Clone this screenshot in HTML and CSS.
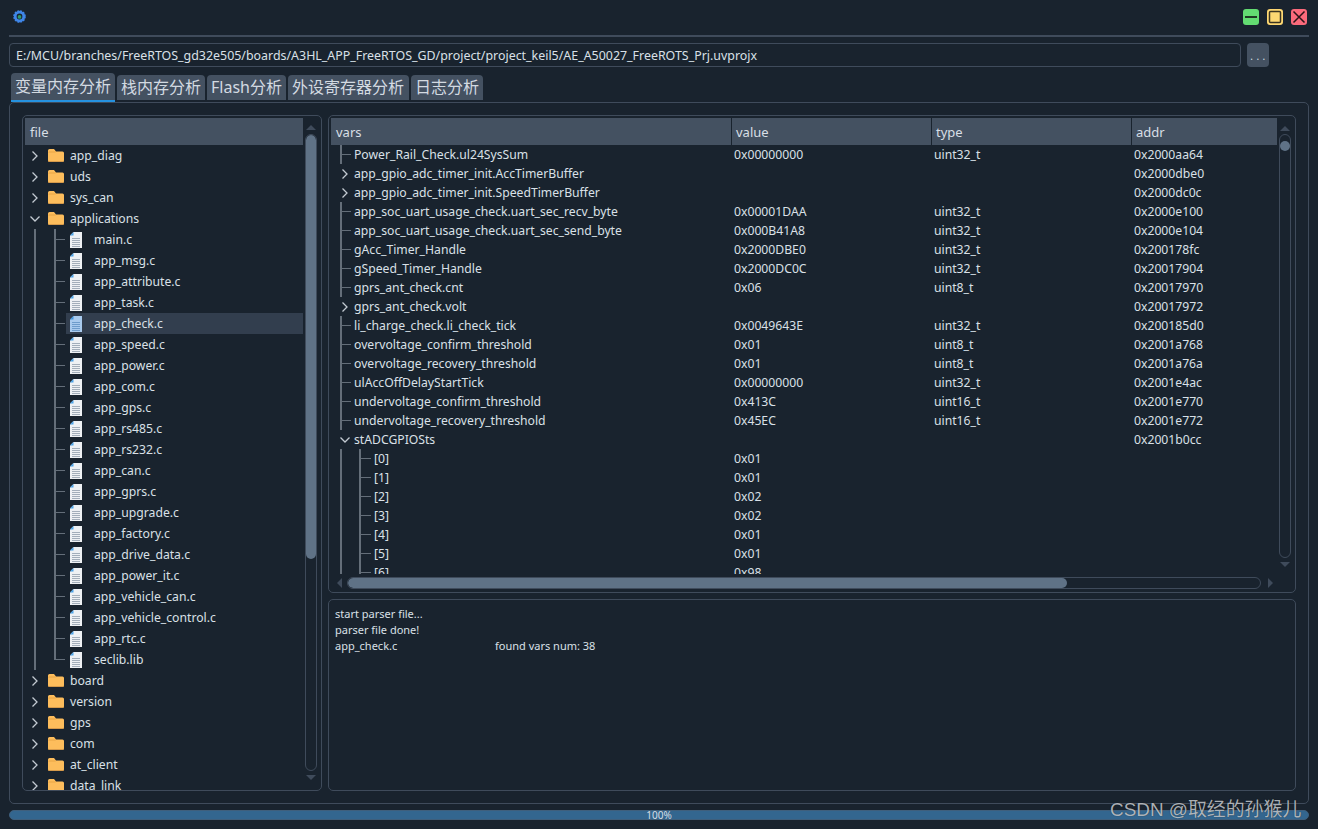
FILE: index.html
```html
<!DOCTYPE html>
<html lang="zh">
<head>
<meta charset="utf-8">
<title>Var Analyzer</title>
<link rel="stylesheet" href="styles.css">
</head>
<body>
<svg class="defs" width="0" height="0">
  <symbol id="folder" viewBox="0 0 16 13"><path d="M0 1.5Q0 0 1.5 0H6L8 2.5H14.5Q16 2.5 16 4V11.5Q16 13 14.5 13H1.5Q0 13 0 11.5Z" fill="#fdbd5c"/><path d="M0 3.5H7.5L8 2.5H1Z" fill="#e9a544"/><path d="M0 12.3H16V11.5Q16 13 14.5 13H1.5Q0 13 0 11.5Z" fill="#c98f45"/></symbol>
  <symbol id="file" viewBox="0 0 12 16"><path d="M3.500 0H12V16H0V3.500Z" fill="#eef1f4"/><path d="M3.500 0V3.500H0Z" fill="#4ba3e8"/><path d="M2 6.500H10M2 8.500H10M2 10.500H10M2 12.500H10M2 14.500H10" stroke="#a3aeba" stroke-width="1"/></symbol>
  <symbol id="file-sel" viewBox="0 0 12 16"><path d="M3.500 0H12V16H0V3.500Z" fill="#a9cbee"/><path d="M3.500 0V3.500H0Z" fill="#3f93dd"/><path d="M2 6.500H10M2 8.500H10M2 10.500H10M2 12.500H10M2 14.500H10" stroke="#6d9ccb" stroke-width="1"/></symbol>
  <symbol id="chev-r" viewBox="0 0 10 12"><path d="M2.500 1.500L7 6L2.500 10.500" fill="none" stroke="#c3cad2" stroke-width="1.300"/></symbol>
  <symbol id="chev-d" viewBox="0 0 12 10"><path d="M1.500 2.500L6 7L10.500 2.500" fill="none" stroke="#c3cad2" stroke-width="1.300"/></symbol>
</svg>
<div class="app">
  <header class="titlebar">
    <svg class="appicon" viewBox="0 0 14 14" width="13" height="13"><circle cx="7" cy="7" r="4.600" fill="none" stroke="#3f86e8" stroke-width="3"/><circle cx="7" cy="7" r="6" fill="none" stroke="#3f86e8" stroke-width="1.600" stroke-dasharray="2 1.140"/><circle cx="7" cy="7.500" r="2" fill="#2e9a6a"/></svg>
    <div class="winbtns">
      <span class="winbtn min"><svg viewBox="0 0 16 16"><path d="M2 8H14" stroke="#1f3a24" stroke-width="2"/></svg></span>
      <span class="winbtn max"><svg viewBox="0 0 16 16"><rect x="2.500" y="2.500" width="11" height="11" rx="1" fill="none" stroke="#3a3320" stroke-width="1.500"/></svg></span>
      <span class="winbtn close"><svg viewBox="0 0 16 16"><path d="M2.500 2.500L13.500 13.500M13.500 2.500L2.500 13.500" stroke="#2a1418" stroke-width="1.500"/></svg></span>
    </div>
  </header>
  <div class="pathrow">
    <div class="pathinput">E:/MCU/branches/FreeRTOS_gd32e505/boards/A3HL_APP_FreeRTOS_GD/project/project_keil5/AE_A50027_FreeROTS_Prj.uvprojx</div>
    <div class="browse">...</div>
  </div>
  <nav class="tabs">
    <div class="tab active">变量内存分析</div>
    <div class="tab">栈内存分析</div>
    <div class="tab">Flash分析</div>
    <div class="tab">外设寄存器分析</div>
    <div class="tab">日志分析</div>
  </nav>
  <main class="panel">
    <section class="treebox">
      <div class="treemain">
        <div class="hdr treehdr">file</div>
        <div class="treebody">
          <div class="trow"><span class="tw"><svg class="cr"><use href="#chev-r"/></svg></span><svg class="fo"><use href="#folder"/></svg><span>app_diag</span></div>
          <div class="trow"><span class="tw"><svg class="cr"><use href="#chev-r"/></svg></span><svg class="fo"><use href="#folder"/></svg><span>uds</span></div>
          <div class="trow"><span class="tw"><svg class="cr"><use href="#chev-r"/></svg></span><svg class="fo"><use href="#folder"/></svg><span>sys_can</span></div>
          <div class="trow"><span class="tw"><svg class="cd"><use href="#chev-d"/></svg></span><svg class="fo"><use href="#folder"/></svg><span>applications</span></div>
          <div class="trow"><i class="g v"></i><i class="g t"></i><div class="it"><svg class="fi"><use href="#file"/></svg><span>main.c</span></div></div>
          <div class="trow"><i class="g v"></i><i class="g t"></i><div class="it"><svg class="fi"><use href="#file"/></svg><span>app_msg.c</span></div></div>
          <div class="trow"><i class="g v"></i><i class="g t"></i><div class="it"><svg class="fi"><use href="#file"/></svg><span>app_attribute.c</span></div></div>
          <div class="trow"><i class="g v"></i><i class="g t"></i><div class="it"><svg class="fi"><use href="#file"/></svg><span>app_task.c</span></div></div>
          <div class="trow"><i class="g v"></i><i class="g t"></i><div class="it sel"><svg class="fi"><use href="#file-sel"/></svg><span>app_check.c</span></div></div>
          <div class="trow"><i class="g v"></i><i class="g t"></i><div class="it"><svg class="fi"><use href="#file"/></svg><span>app_speed.c</span></div></div>
          <div class="trow"><i class="g v"></i><i class="g t"></i><div class="it"><svg class="fi"><use href="#file"/></svg><span>app_power.c</span></div></div>
          <div class="trow"><i class="g v"></i><i class="g t"></i><div class="it"><svg class="fi"><use href="#file"/></svg><span>app_com.c</span></div></div>
          <div class="trow"><i class="g v"></i><i class="g t"></i><div class="it"><svg class="fi"><use href="#file"/></svg><span>app_gps.c</span></div></div>
          <div class="trow"><i class="g v"></i><i class="g t"></i><div class="it"><svg class="fi"><use href="#file"/></svg><span>app_rs485.c</span></div></div>
          <div class="trow"><i class="g v"></i><i class="g t"></i><div class="it"><svg class="fi"><use href="#file"/></svg><span>app_rs232.c</span></div></div>
          <div class="trow"><i class="g v"></i><i class="g t"></i><div class="it"><svg class="fi"><use href="#file"/></svg><span>app_can.c</span></div></div>
          <div class="trow"><i class="g v"></i><i class="g t"></i><div class="it"><svg class="fi"><use href="#file"/></svg><span>app_gprs.c</span></div></div>
          <div class="trow"><i class="g v"></i><i class="g t"></i><div class="it"><svg class="fi"><use href="#file"/></svg><span>app_upgrade.c</span></div></div>
          <div class="trow"><i class="g v"></i><i class="g t"></i><div class="it"><svg class="fi"><use href="#file"/></svg><span>app_factory.c</span></div></div>
          <div class="trow"><i class="g v"></i><i class="g t"></i><div class="it"><svg class="fi"><use href="#file"/></svg><span>app_drive_data.c</span></div></div>
          <div class="trow"><i class="g v"></i><i class="g t"></i><div class="it"><svg class="fi"><use href="#file"/></svg><span>app_power_it.c</span></div></div>
          <div class="trow"><i class="g v"></i><i class="g t"></i><div class="it"><svg class="fi"><use href="#file"/></svg><span>app_vehicle_can.c</span></div></div>
          <div class="trow"><i class="g v"></i><i class="g t"></i><div class="it"><svg class="fi"><use href="#file"/></svg><span>app_vehicle_control.c</span></div></div>
          <div class="trow"><i class="g v"></i><i class="g t"></i><div class="it"><svg class="fi"><use href="#file"/></svg><span>app_rtc.c</span></div></div>
          <div class="trow"><i class="g v"></i><i class="g l"></i><div class="it"><svg class="fi"><use href="#file"/></svg><span>seclib.lib</span></div></div>
          <div class="trow"><span class="tw"><svg class="cr"><use href="#chev-r"/></svg></span><svg class="fo"><use href="#folder"/></svg><span>board</span></div>
          <div class="trow"><span class="tw"><svg class="cr"><use href="#chev-r"/></svg></span><svg class="fo"><use href="#folder"/></svg><span>version</span></div>
          <div class="trow"><span class="tw"><svg class="cr"><use href="#chev-r"/></svg></span><svg class="fo"><use href="#folder"/></svg><span>gps</span></div>
          <div class="trow"><span class="tw"><svg class="cr"><use href="#chev-r"/></svg></span><svg class="fo"><use href="#folder"/></svg><span>com</span></div>
          <div class="trow"><span class="tw"><svg class="cr"><use href="#chev-r"/></svg></span><svg class="fo"><use href="#folder"/></svg><span>at_client</span></div>
          <div class="trow"><span class="tw"><svg class="cr"><use href="#chev-r"/></svg></span><svg class="fo"><use href="#folder"/></svg><span>data_link</span></div>
        </div>
      </div>
      <div class="vbar treebar">
        <span class="arr up"></span>
        <div class="vtrack"><div class="vthumb tall"></div></div>
        <span class="arr down"></span>
      </div>
    </section>
    <div class="rightcol">
      <section class="tablebox">
        <div class="tablemid">
          <div class="tablemain">
            <div class="thead">
              <div class="hdr c1">vars</div><div class="hdr c2">value</div><div class="hdr c3">type</div><div class="hdr c4">addr</div>
            </div>
            <div class="tbody">
              <div class="vrow"><div class="c1 n"><i class="m t"></i><span>Power_Rail_Check.ul24SysSum</span></div><div class="c2">0x00000000</div><div class="c3">uint32_t</div><div class="c4">0x2000aa64</div></div>
              <div class="vrow"><div class="c1 n"><span class="m"><svg class="cr"><use href="#chev-r"/></svg></span><span>app_gpio_adc_timer_init.AccTimerBuffer</span></div><div class="c2"></div><div class="c3"></div><div class="c4">0x2000dbe0</div></div>
              <div class="vrow"><div class="c1 n"><span class="m"><svg class="cr"><use href="#chev-r"/></svg></span><span>app_gpio_adc_timer_init.SpeedTimerBuffer</span></div><div class="c2"></div><div class="c3"></div><div class="c4">0x2000dc0c</div></div>
              <div class="vrow"><div class="c1 n"><i class="m t"></i><span>app_soc_uart_usage_check.uart_sec_recv_byte</span></div><div class="c2">0x00001DAA</div><div class="c3">uint32_t</div><div class="c4">0x2000e100</div></div>
              <div class="vrow"><div class="c1 n"><i class="m t"></i><span>app_soc_uart_usage_check.uart_sec_send_byte</span></div><div class="c2">0x000B41A8</div><div class="c3">uint32_t</div><div class="c4">0x2000e104</div></div>
              <div class="vrow"><div class="c1 n"><i class="m t"></i><span>gAcc_Timer_Handle</span></div><div class="c2">0x2000DBE0</div><div class="c3">uint32_t</div><div class="c4">0x200178fc</div></div>
              <div class="vrow"><div class="c1 n"><i class="m t"></i><span>gSpeed_Timer_Handle</span></div><div class="c2">0x2000DC0C</div><div class="c3">uint32_t</div><div class="c4">0x20017904</div></div>
              <div class="vrow"><div class="c1 n"><i class="m t"></i><span>gprs_ant_check.cnt</span></div><div class="c2">0x06</div><div class="c3">uint8_t</div><div class="c4">0x20017970</div></div>
              <div class="vrow"><div class="c1 n"><span class="m"><svg class="cr"><use href="#chev-r"/></svg></span><span>gprs_ant_check.volt</span></div><div class="c2"></div><div class="c3"></div><div class="c4">0x20017972</div></div>
              <div class="vrow"><div class="c1 n"><i class="m t"></i><span>li_charge_check.li_check_tick</span></div><div class="c2">0x0049643E</div><div class="c3">uint32_t</div><div class="c4">0x200185d0</div></div>
              <div class="vrow"><div class="c1 n"><i class="m t"></i><span>overvoltage_confirm_threshold</span></div><div class="c2">0x01</div><div class="c3">uint8_t</div><div class="c4">0x2001a768</div></div>
              <div class="vrow"><div class="c1 n"><i class="m t"></i><span>overvoltage_recovery_threshold</span></div><div class="c2">0x01</div><div class="c3">uint8_t</div><div class="c4">0x2001a76a</div></div>
              <div class="vrow"><div class="c1 n"><i class="m t"></i><span>ulAccOffDelayStartTick</span></div><div class="c2">0x00000000</div><div class="c3">uint32_t</div><div class="c4">0x2001e4ac</div></div>
              <div class="vrow"><div class="c1 n"><i class="m t"></i><span>undervoltage_confirm_threshold</span></div><div class="c2">0x413C</div><div class="c3">uint16_t</div><div class="c4">0x2001e770</div></div>
              <div class="vrow"><div class="c1 n"><i class="m t"></i><span>undervoltage_recovery_threshold</span></div><div class="c2">0x45EC</div><div class="c3">uint16_t</div><div class="c4">0x2001e772</div></div>
              <div class="vrow"><div class="c1 n"><span class="m"><svg class="cd"><use href="#chev-d"/></svg></span><span>stADCGPIOSts</span></div><div class="c2"></div><div class="c3"></div><div class="c4">0x2001b0cc</div></div>
              <div class="vrow"><div class="c1 n"><i class="m v"></i><i class="k t"></i><span>[0]</span></div><div class="c2">0x01</div><div class="c3"></div><div class="c4"></div></div>
              <div class="vrow"><div class="c1 n"><i class="m v"></i><i class="k t"></i><span>[1]</span></div><div class="c2">0x01</div><div class="c3"></div><div class="c4"></div></div>
              <div class="vrow"><div class="c1 n"><i class="m v"></i><i class="k t"></i><span>[2]</span></div><div class="c2">0x02</div><div class="c3"></div><div class="c4"></div></div>
              <div class="vrow"><div class="c1 n"><i class="m v"></i><i class="k t"></i><span>[3]</span></div><div class="c2">0x02</div><div class="c3"></div><div class="c4"></div></div>
              <div class="vrow"><div class="c1 n"><i class="m v"></i><i class="k t"></i><span>[4]</span></div><div class="c2">0x01</div><div class="c3"></div><div class="c4"></div></div>
              <div class="vrow"><div class="c1 n"><i class="m v"></i><i class="k t"></i><span>[5]</span></div><div class="c2">0x01</div><div class="c3"></div><div class="c4"></div></div>
              <div class="vrow"><div class="c1 n"><i class="m v"></i><i class="k t"></i><span>[6]</span></div><div class="c2">0x98</div><div class="c3"></div><div class="c4"></div></div>
            </div>
          </div>
          <div class="vbar tablebar">
            <span class="arr up"></span>
            <div class="vtrack"><div class="vdot"></div></div>
            <span class="arr down"></span>
          </div>
        </div>
        <div class="hbar">
          <span class="arr left"></span>
          <div class="htrack"><div class="hthumb"></div></div>
          <span class="arr right"></span>
        </div>
      </section>
      <section class="logbox">
        <div>start parser file...</div>
        <div>parser file done!</div>
        <div class="logline"><span class="logname">app_check.c</span><span>found vars num: 38</span></div>
      </section>
    </div>
  </main>
  <div class="progress">100%</div>
</div>
<div class="watermark">CSDN @取经的孙猴儿</div>
</body>
</html>
```
FILE: styles.css
```css
* { box-sizing: border-box; }
html, body { margin: 0; height: 100%; }
body {
  position: relative;
  overflow: hidden;
  background: #19232e;
  color: #d9e0e7;
  font: 12.2px/1 "Noto Sans", "Noto Sans CJK SC", sans-serif;
}
.defs { position: absolute; }
.app { display: flex; flex-direction: column; height: 829px; padding: 0 9px; }

.titlebar {
  display: flex; align-items: center; justify-content: space-between;
  height: 37px; flex: none;
  border-bottom: 2px solid #3f4b5b;
  padding: 0 2px 2px 4px;
}
.winbtns { display: flex; gap: 8px; }
.winbtn { width: 16px; height: 16px; border-radius: 3px; display: block; }
.winbtn svg { display: block; width: 16px; height: 16px; }
.min { background: #63dc72; }
.max { background: #fdd772; }
.close { background: #fa6a7b; }

.pathrow { display: flex; gap: 6px; margin-top: 6px; height: 24px; flex: none; }
.pathinput {
  flex: 1; border: 1px solid #3f4b5b; border-radius: 4px;
  padding: 0 6px; line-height: 23px; white-space: nowrap; font-size: 12.42px;
}
.browse {
  width: 22px; background: #445161; border-radius: 4px; margin-right: 40px;
  text-align: center; line-height: 26px; font-size: 10px; letter-spacing: 3.5px; padding-left: 3px;
}

.tabs { display: flex; align-items: flex-end; gap: 2px; height: 29px; margin-top: 6px; padding-left: 2px; flex: none; }
.tab {
  height: 25px; margin-bottom: 2px; padding: 0 4px; background: #445161; border-radius: 4px 4px 0 0;
  font-size: 16px; line-height: 25px; color: #d3dae1;
}
.tab:nth-child(4) { padding-right: 5px; }
.tab.active { height: 29px; margin-bottom: 0; border-bottom: 2px solid #2592df; line-height: 27px; }

.panel {
  flex: none; height: 702px; display: flex; gap: 6px;
  border: 1px solid #3f4b5b; border-radius: 5px;
  padding: 12px;
}
.treebox {
  width: 300px; flex: none; display: flex; overflow: hidden;
  border: 1px solid #3f4b5b; border-radius: 5px;
  padding: 2px 4px 0 2px;
}
.treemain { width: 278px; flex: none; display: flex; flex-direction: column; min-height: 0; }
.hdr { background: #445161; height: 27px; line-height: 29px; font-size: 13px; padding-left: 4px; color: #d8dfe6; }
.hdr.c1 { padding-left: 5px; }
.treehdr { flex: none; padding-left: 5px; }
.treebody { flex: 1; overflow: hidden; }
.trow { display: flex; align-items: center; height: 21px; white-space: nowrap; }
.trow > span:last-child { margin-left: 6px; padding-top: 2px; }
.tw { width: 20px; flex: none; display: flex; justify-content: center; }
.cr { width: 10px; height: 12px; display: block; }
.cd { width: 12px; height: 10px; display: block; }
.fo { width: 16px; height: 13px; margin-left: 3px; flex: none; }
.g { display: block; flex: none; height: 21px; }
.g.v { width: 20px; background: linear-gradient(#646e79, #646e79) 9px 0 / 2px 100% no-repeat; }
.g.t { width: 21px; background: linear-gradient(#646e79, #646e79) 9px 0 / 2px 100% no-repeat, linear-gradient(#646e79, #646e79) 11px 10px / 9px 1px no-repeat; }
.g.l { width: 21px; background: linear-gradient(#646e79, #646e79) 9px 0 / 2px 11px no-repeat, linear-gradient(#646e79, #646e79) 11px 10px / 9px 1px no-repeat; }
.it { flex: 1; display: flex; align-items: center; height: 21px; padding-left: 4px; }
.it span { margin-left: 12px; padding-top: 2px; }
.sel { background: #323e4e; }
.fi { width: 12px; height: 16px; flex: none; }

.vbar { display: flex; flex-direction: column; align-items: center; flex: none; width: 12px; }
.treebar { margin-left: 2px; padding-top: 7px; }
.vtrack { border: 1px solid #3f4b5b; border-radius: 6px; width: 12px; overflow: hidden; }
.treebar .vtrack { height: 637px; margin-top: 4px; }
.vthumb.tall { height: 424px; background: #5f7286; border-radius: 5px; }
.arr { display: block; width: 0; height: 0; flex: none; border-style: solid; border-color: transparent; }
.arr.up { border-width: 0 5px 5px; border-bottom-color: #3f4b5b; }
.arr.down { border-width: 5px 5px 0; border-top-color: #3f4b5b; margin-top: 4px; }
.arr.left { border-width: 5px 5px 5px 0; border-right-color: #3f4b5b; }
.arr.right { border-width: 5px 0 5px 5px; border-left-color: #3f4b5b; }

.rightcol { flex: 1; display: flex; flex-direction: column; gap: 6px; min-width: 0; }
.tablebox {
  height: 478px; flex: none; display: flex; flex-direction: column;
  border: 1px solid #3f4b5b; border-radius: 5px;
  padding: 2px 4px 4px 2px;
}
.tablemid { display: flex; height: 456px; flex: none; gap: 2px; }
.tablemain { width: 946px; flex: none; overflow: hidden; display: flex; flex-direction: column; }
.thead { display: flex; gap: 1px; flex: none; }
.c1 { width: 400px; flex: none; }
.c2 { width: 199px; flex: none; }
.c3 { width: 199px; flex: none; }
.c4 { flex: 1; }
.tbody { flex: 1; overflow: hidden; }
.vrow { display: flex; gap: 1px; height: 19px; line-height: 19px; white-space: nowrap; }
.vrow .c2, .vrow .c3, .vrow .c4 { padding-left: 2px; }
.n { display: flex; align-items: center; height: 19px; padding-left: 5px; }
.m { display: flex; justify-content: center; align-items: center; width: 18px; height: 19px; flex: none; }
.k { display: block; width: 20px; height: 19px; flex: none; }
.m.t { background: linear-gradient(#646e79, #646e79) 4px 0 / 2px 100% no-repeat, linear-gradient(#646e79, #646e79) 6px 9px / 9px 1px no-repeat; }
.m.v { background: linear-gradient(#646e79, #646e79) 4px 0 / 2px 100% no-repeat; }
.k.t { background: linear-gradient(#646e79, #646e79) 5px 0 / 2px 100% no-repeat, linear-gradient(#646e79, #646e79) 7px 9px / 10px 1px no-repeat; }
.tablebar { padding-top: 8px; }
.tablebar .vtrack { height: 424px; margin-top: 3px; padding: 6px 0 0; display: flex; justify-content: center; }
.vdot { width: 10px; height: 10px; border-radius: 50%; background: #5f7286; }

.hbar { display: flex; align-items: center; height: 14px; margin-top: 2px; padding-left: 6px; flex: none; }
.htrack { width: 914px; height: 12px; margin: 0 7px 0 5px; border: 1px solid #3f4b5b; border-radius: 6px; overflow: hidden; flex: none; }
.hthumb { width: 719px; height: 100%; background: #5f7286; border-radius: 5px; }

.logbox {
  flex: 1; border: 1px solid #3f4b5b; border-radius: 5px;
  padding: 6px; font-size: 11px; line-height: 16px;
}
.logline { display: flex; }
.logname { width: 160px; flex: none; }

.progress {
  flex: none; height: 10px; margin-top: 6px; background: #33668f; border-radius: 5px;
  border: 1px solid #3f5f7c;
  text-align: center; font-size: 10px; line-height: 9px; color: #d6dde4;
}
.watermark {
  position: absolute; left: 1110px; top: 799px;
  font: 18.9px/22px "Liberation Sans", "Noto Sans CJK SC", sans-serif;
  color: rgba(200, 205, 210, 0.85); white-space: nowrap;
  text-shadow: 0 0 1px rgba(0, 0, 0, 0.6);
}
```
